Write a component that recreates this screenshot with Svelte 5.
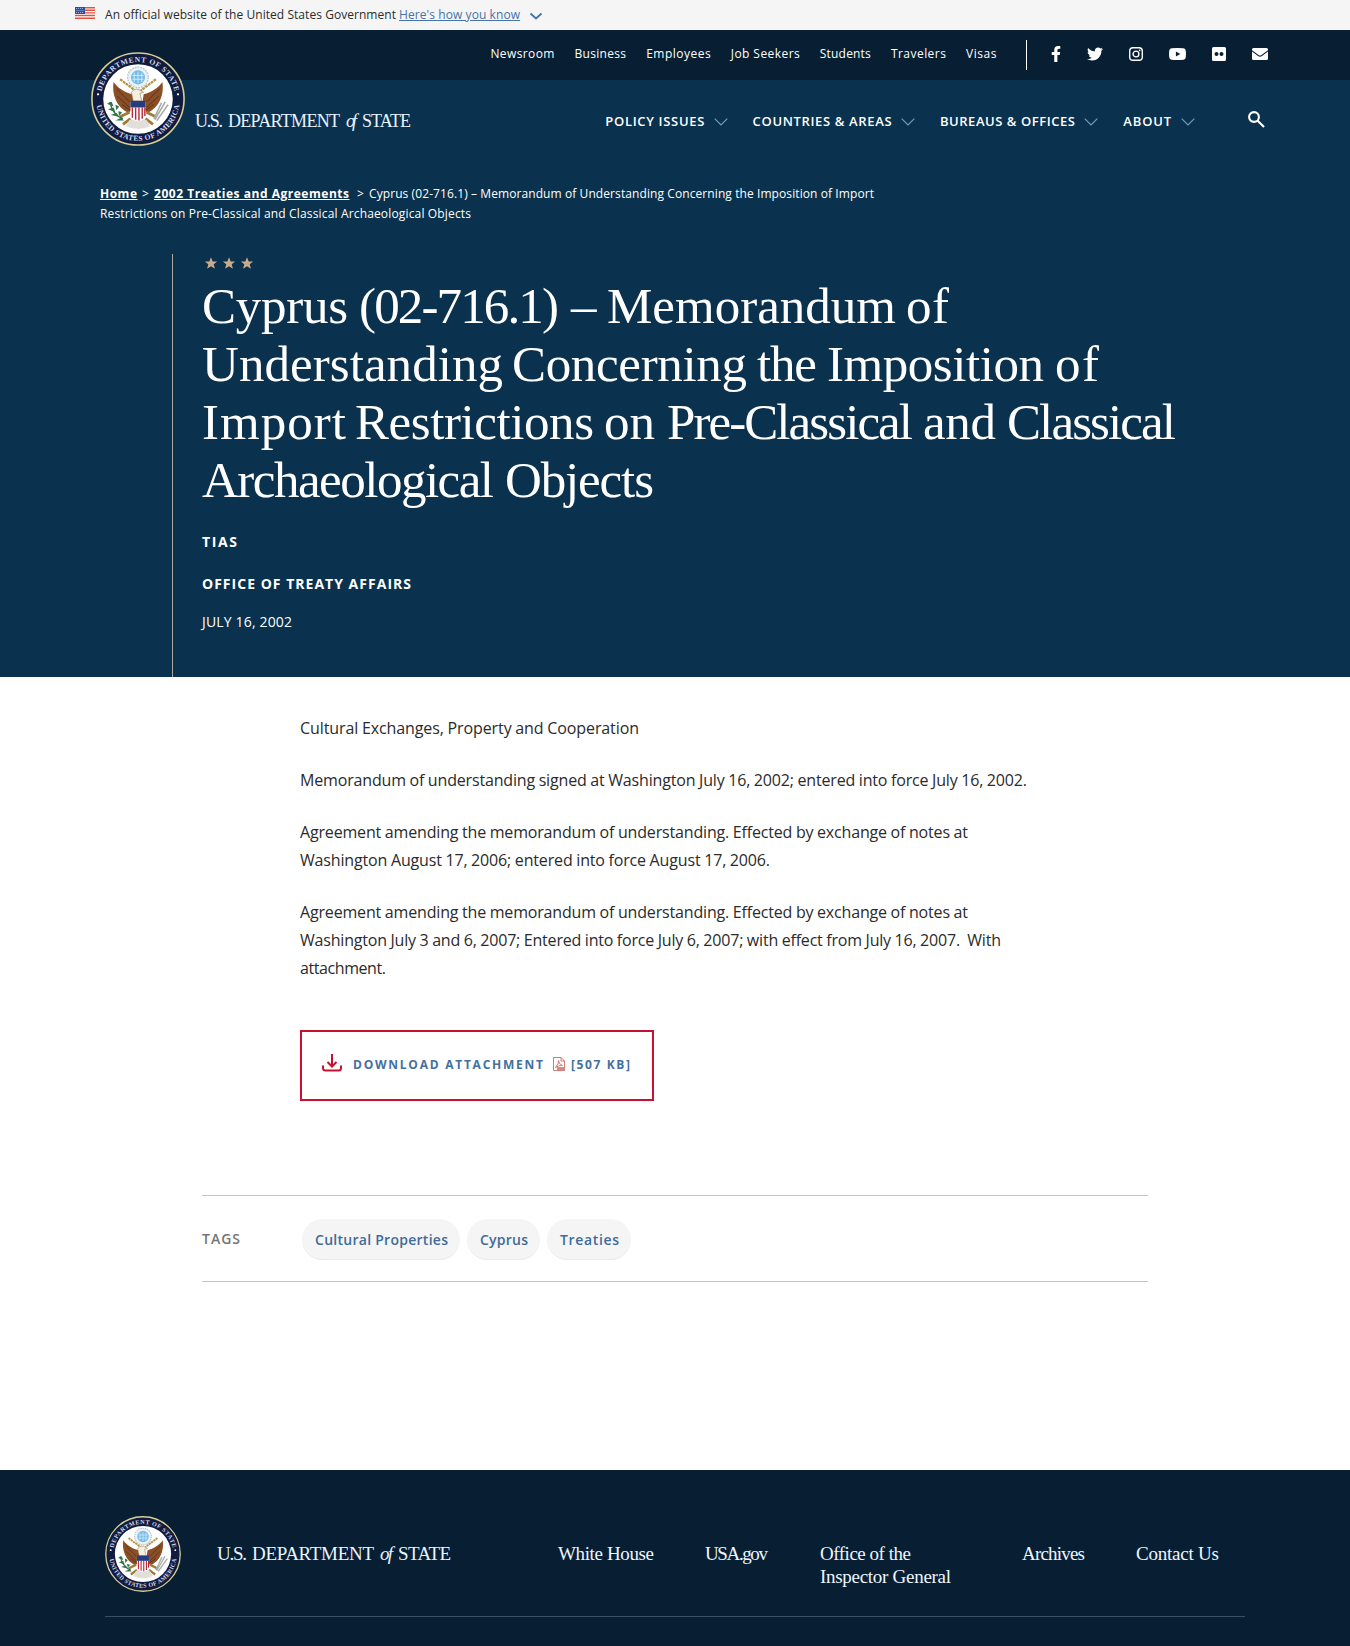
<script>
  const audiences = [
    { label: 'Newsroom', w: 64 },
    { label: 'Business', w: 51.5 },
    { label: 'Employees', w: 64.5 },
    { label: 'Job Seekers', w: 69 },
    { label: 'Students', w: 51 },
    { label: 'Travelers', w: 55 },
    { label: 'Visas', w: 30.5 }
  ];
  const sections = [
    { label: 'POLICY ISSUES', w: 99 },
    { label: 'COUNTRIES & AREAS', w: 139 },
    { label: 'BUREAUS & OFFICES', w: 135 },
    { label: 'ABOUT', w: 48 }
  ];
  // Each title word carries its measure and the space that follows it.
  const titleLines = [
    [['Cyprus', 146, 11], ['(02-716.1)', 200, 12], ['–', 24, 12], ['Memorandum', 289, 10], ['of', 43, 0]],
    [['Understanding', 301, 9], ['Concerning', 235, 10], ['the', 60, 10], ['Imposition', 217, 11], ['of', 44, 0]],
    [['Import', 144, 9], ['Restrictions', 239, 10], ['on', 51, 12], ['Pre-Classical', 246, 10], ['and', 73, 11], ['Classical', 169, 0]],
    [['Archaeological', 292, 11], ['Objects', 149, 0]]
  ];
  const paragraphs = [
    [{ text: 'Cultural Exchanges, Property and Cooperation', w: 339 }],
    [{ text: 'Memorandum of understanding signed at Washington July 16, 2002; entered into force July 16, 2002.', w: 727 }],
    [
      { text: 'Agreement amending the memorandum of understanding. Effected by exchange of notes at', w: 668 },
      { text: 'Washington August 17, 2006; entered into force August 17, 2006.', w: 470 }
    ],
    [
      { text: 'Agreement amending the memorandum of understanding. Effected by exchange of notes at', w: 668 },
      { text: 'Washington July 3 and 6, 2007; Entered into force July 6, 2007; with effect from July 16, 2007.\u00a0 With', w: 701 },
      { text: 'attachment.', w: 86 }
    ]
  ];
  const tags = [
    { label: 'Cultural Properties', w: 133 },
    { label: 'Cyprus', w: 48 },
    { label: 'Treaties', w: 59 }
  ];

  // Tracks a line of text so that it sets to the given measure.
  function fit(node, width) {
    const natural = node.getBoundingClientRect().width;
    const gaps = Math.max(1, node.textContent.length - 1);
    node.style.letterSpacing = `${(width - natural) / gaps}px`;
    node.style.width = `${width}px`;
  }
</script>

{#snippet seal(id)}
  <svg class="seal" viewBox="0 0 100 100" aria-label="Department of State seal">
    <defs>
      <path id="{id}-top" d="M10.5 50a39.500 39.500 0 0 1 79 0" />
      <path id="{id}-bottom" d="M5.500 50a44.500 44.500 0 0 0 89 0" />
    </defs>
    <circle cx="50" cy="50" r="49" fill="#101b40" stroke="#d8cd94" stroke-width="1.700" />
    <circle cx="50" cy="50" r="37" fill="#fff" />
    <g class="ring">
      <text><textPath href="#{id}-top" startOffset="8" textLength="108">DEPARTMENT OF STATE</textPath></text>
      <text><textPath href="#{id}-bottom" startOffset="7" textLength="126">UNITED STATES OF AMERICA</textPath></text>
    </g>
    <circle cx="7.500" cy="45" r="1.200" fill="#fff" />
    <circle cx="92.500" cy="45" r="1.200" fill="#fff" />
    <circle cx="50" cy="27" r="11" fill="#e8f2f7" stroke="#b9c4c6" stroke-width="1.400" stroke-dasharray="2 1" />
    <circle cx="50" cy="27" r="7.500" fill="#76bce6" />
    <path d="M46 22v10M50 21v12M54 22v10M44 25h12M44 29h12" stroke="#d8effb" stroke-width=".9" />
    <path d="M31 29 47 41M69 29 53 41" stroke="#b79547" stroke-width="2.400" stroke-dasharray="3 .7" />
    <path d="M24 32C22 45 27 59 40 65L46 59 44 45C36 43 29 39 24 32ZM76 32C78 45 73 59 60 65L54 59 56 45C64 43 71 39 76 32Z" fill="#8a4f26" />
    <path d="M27 39 41 53M28 47 41 59M33 56 42 62M73 39 59 53M72 47 59 59M67 56 58 62" stroke="#5a2f18" stroke-width="1" />
    <path d="M43 43q3-5 8-3l5 3-4 1 2 8h-9Z" fill="#f4f0df" stroke="#98805d" stroke-width=".7" />
    <path d="M41 64 31 69M59 64 69 69M42 71l-8 6M58 71l8 6" stroke="#a27a35" stroke-width="3" />
    <path d="M41 72h18l4 7q-13 6-26 0Z" fill="#e1dfd9" />
    <path d="M42 53h16v14q0 5-8 7-8-2-8-7Z" fill="#fff" />
    <path d="M44 59v11M47.500 59v13M51 59v14M54.500 59v12M57.300 59v9" stroke="#b72a3a" stroke-width="1.500" />
    <path d="M42 52h16v7H42Z" fill="#263b80" />
    <path d="M20 53q3 14 14 18" fill="none" stroke="#2d7447" stroke-width="1.500" />
    <path d="m17 55 5-2 2 5ZM18 61l6-2 2 5ZM21 67l6-2 3 4ZM26 56l4 2-3 4ZM29 63l4 1-3 4ZM26 73l6-3 3 3Z" fill="#2d7447" />
    <path d="m68 72 11-19M67 71l8-17M70 73l12-17" stroke="#a6aaa9" stroke-width="1.700" />
  </svg>
{/snippet}

{#snippet wordmark(us, dept, of, state)}
  <span class="wordmark">
    <span class="t" use:fit={us}>U.S.</span>
    <span class="t" use:fit={dept}>DEPARTMENT</span>
    <em class="t" use:fit={of}>of</em>
    <span class="t" use:fit={state}>STATE</span>
  </span>
{/snippet}

<div class="gov">
  <svg class="flag" viewBox="0 0 20 12">
    <path fill="#fff" d="M0 0h20v12H0z" />
    <path d="M0 .7h20M0 3.300h20M0 5.900h20M0 8.500h20M0 11.200h20" stroke="#e0523f" stroke-width="1.400" />
    <path fill="#2f4ea8" d="M0 0h10v7H0z" />
    <path d="M1 1.500h8M1.500 3.500h8M1 5.500h8" stroke="#b9c6ee" stroke-width=".8" stroke-dasharray="1 1" />
  </svg>
  <span class="gov-text"><span class="t" use:fit={291}>An official website of the United States Government</span></span>
  <a href="#how"><span class="t" use:fit={121}>Here's how you know</span></a>
  <svg class="gov-chev" viewBox="0 0 14 8"><path d="m1.500 1.500 5.500 5 5.500-5" /></svg>
</div>

<header>
  <a class="logo" href="#home">
    {@render seal('head')}
    {@render wordmark(28, 112, 11, 49)}
  </a>
  <div class="top">
    <nav>
      {#each audiences as a}
        <a href="#nav"><span class="t" use:fit={a.w}>{a.label}</span></a>
      {/each}
    </nav>
    <div class="social">
      <svg width="10" height="16" viewBox="0 0 320 512"><path d="M279 288l14-93h-89v-60c0-25 12-50 52-50h41V7s-37-7-72-7C152 0 104 44 104 125v70H23v93h81v224h100V288z" /></svg>
      <svg width="16" height="16" viewBox="0 0 512 512"><path d="M459.370 151.716c.325 4.548.325 9.097.325 13.645 0 138.720-105.583 298.558-298.558 298.558-59.452 0-114.680-17.219-161.137-47.106 8.447.974 16.568 1.299 25.340 1.299 49.055 0 94.213-16.568 130.274-44.832-46.132-.975-84.792-31.188-98.112-72.772 6.498.974 12.995 1.624 19.818 1.624 9.421 0 18.843-1.300 27.614-3.573-48.081-9.747-84.143-51.980-84.143-102.985v-1.299c13.969 7.797 30.214 12.670 47.431 13.319-28.264-18.843-46.781-51.005-46.781-87.391 0-19.492 5.197-37.360 14.294-52.954 51.655 63.675 129.300 105.258 216.365 109.807-1.624-7.797-2.599-15.918-2.599-24.040 0-57.828 46.782-104.934 104.934-104.934 30.213 0 57.502 12.670 76.670 33.137 23.715-4.548 46.456-13.320 66.599-25.340-7.798 24.366-24.366 44.833-46.132 57.827 21.117-2.273 41.584-8.122 60.426-16.243-14.292 20.791-32.161 39.308-52.628 54.253z" /></svg>
      <svg width="14" height="14" viewBox="0 0 14 14"><rect x=".7" y=".7" width="12.600" height="12.600" rx="3.300" fill="none" stroke="#fff" stroke-width="1.400" /><circle cx="7" cy="7" r="2.900" fill="none" stroke="#fff" stroke-width="1.400" /><circle cx="10.700" cy="3.300" r=".85" /></svg>
      <svg width="17" height="12" viewBox="0 0 17 12"><path fill-rule="evenodd" d="M2.500.3Q8.500-.3 14.500.3q2 .2 2.200 2.200.5 3.500 0 7-.2 2-2.200 2.200-6 .6-12 0-2-.2-2.200-2.200-.5-3.500 0-7Q.5.500 2.500.3ZM6.900 3.500v5L11.300 6Z" /></svg>
      <svg width="14" height="14" viewBox="0 0 14 14"><path fill-rule="evenodd" d="M1.500 0h11Q14 0 14 1.500v11q0 1.500-1.500 1.500h-11Q0 14 0 12.500v-11Q0 0 1.500 0ZM4.500 5a2 2 0 1 0 0 4 2 2 0 0 0 0-4Zm5 0a2 2 0 1 0 0 4 2 2 0 0 0 0-4Z" /></svg>
      <svg width="16" height="12" viewBox="0 0 16 12"><path d="M1.500 0h13Q16 0 16 1.500v.7L9.500 7Q8 8 6.500 7L0 2.200v-.7Q0 0 1.500 0ZM0 3.500 6 8q2 1.300 4 0l6-4.500v7q0 1.500-1.500 1.500h-13Q0 12 0 10.500Z" /></svg>
    </div>
  </div>
  <div class="main-nav">
    {#each sections as s}
      <a href="#section"><span class="t" use:fit={s.w}>{s.label}</span><svg class="chev" viewBox="0 0 14 8"><path d="m.7.700 6.300 6.300 6.300-6.300" /></svg></a>
    {/each}
    <svg class="search" viewBox="0 0 17 17"><circle cx="6" cy="6" r="4.900" /><path d="m9.700 9.700 6.300 6.300" /></svg>
  </div>
</header>

<section class="hero">
  <div class="crumbs">
    <div><a href="#home"><span class="t" use:fit={37}>Home</span></a><i class="s1">&gt;</i><a href="#2002"><span class="t" use:fit={195}>2002 Treaties and Agreements</span></a><i class="s2">&gt;</i><span class="t" use:fit={505}>Cyprus (02-716.1) – Memorandum of Understanding Concerning the Imposition of Import</span></div>
    <div><span class="t" use:fit={371}>Restrictions on Pre-Classical and Classical Archaeological Objects</span></div>
  </div>
  <div class="intro">
    <svg class="stars" viewBox="0 0 48 12">
      {#each [6, 24, 42] as x}
        <path transform="translate({x} 6.500) scale(1.120)" d="M0-5.500 1.500-1.800 5.500-1.700 2.400.700 3.500 4.700 0 2.400-3.500 4.700-2.400.700-5.500-1.700-1.500-1.800Z" />
      {/each}
    </svg>
    <h1>
      {#each titleLines as line}
        <span class="line">
          {#each line as [word, w, space]}
            <span class="t" use:fit={w} style:margin-right="{space}px">{word}</span>{' '}
          {/each}
        </span>
      {/each}
    </h1>
    <p class="kind"><span class="t" use:fit={35}>TIAS</span></p>
    <p class="office"><span class="t" use:fit={209}>OFFICE OF TREATY AFFAIRS</span></p>
    <p class="date"><span class="t" use:fit={90}>JULY 16, 2002</span></p>
  </div>
</section>

<main>
  <article>
    {#each paragraphs as p}
      <p>
        {#each p as line}
          <span class="line"><span class="t" use:fit={line.w}>{line.text}</span></span>
        {/each}
      </p>
    {/each}
    <a class="download" href="#file">
      <svg class="dl" viewBox="0 0 20 18"><path d="M10 0v12M5.500 8l4.500 4.500L14.500 8M1 11.500V14q0 2.500 2.500 2.500h13Q19 16.500 19 14v-2.500" /></svg>
      <span class="t" use:fit={190}>DOWNLOAD ATTACHMENT</span>
      <svg class="pdf" viewBox="0 0 12 14"><path d="M.5.500h7.500l3.500 3.500v9.500H.5ZM8 .5V4h3.500M2.500 10.500Q6 7 5.500 3.500 5.500 7 9.500 8.500 6 8 2.500 10.500Z" /><path d="M4 10h7v3H4z" class="label" /></svg>
      <span class="t" use:fit={59}>[507 KB]</span>
    </a>
  </article>
  <div class="tags">
    <h2><span class="t" use:fit={38}>TAGS</span></h2>
    {#each tags as tag}
      <a href="#tag"><span class="t" use:fit={tag.w}>{tag.label}</span></a>
    {/each}
  </div>
</main>

<footer>
  <div class="foot">
    {@render seal('foot')}
    {@render wordmark(30, 122, 13, 53)}
    <nav>
      <a class="f1" href="#wh"><span class="t" use:fit={96}>White House</span></a>
      <a class="f2" href="#usa"><span class="t" use:fit={63}>USA.gov</span></a>
      <a class="f3" href="#oig"><span class="t" use:fit={91}>Office of the</span><br /><span class="t" use:fit={131}>Inspector General</span></a>
      <a class="f4" href="#arch"><span class="t" use:fit={63}>Archives</span></a>
      <a class="f5" href="#contact"><span class="t" use:fit={83}>Contact Us</span></a>
    </nav>
  </div>
</footer>

<style>
  :global(body) { margin: 0; background: #fff; font-family: 'Open Sans', sans-serif; color: #2b2b2b; }
  :global(*) { box-sizing: border-box; }
  a { color: inherit; text-decoration: none; }
  svg { display: block; flex: none; }
  .t { display: inline-block; white-space: nowrap; }
  .line { display: block; }

  .gov { height: 30px; padding: 0 0 2px 75px; display: flex; align-items: center; background: #f5f5f5; font-size: 12px; }
  .flag { width: 20px; height: 12px; margin: 0 10px 2px 0; }
  .gov a { margin-left: 3px; color: #4773a5; text-decoration: underline; }
  .gov a .t { text-decoration: underline; }
  .gov-chev { width: 14px; height: 8px; margin: 4px 0 0 9px; fill: none; stroke: #4773a5; stroke-width: 1.800; }

  header { display: grid; grid-template: 50px 90px / 500px 1fr; background: linear-gradient(#081f33 50px, #0a314d 50px); color: #fff; }
  .logo { grid-row: 1 / 3; display: flex; padding: 22px 0 0 91px; }
  .logo .seal { width: 94px; height: 94px; }
  .logo .wordmark { margin: 55px 0 0 10px; }
  .wordmark { display: flex; gap: 5px; font: 18px/28px 'Liberation Serif', serif; color: #e8f4ff; }
  .wordmark em { margin-left: 1px; }
  .ring text { font: bold 8px 'Liberation Serif', serif; fill: #d4d9ee; }
  .top { display: flex; justify-content: flex-end; align-items: center; padding-right: 82px; margin-left: -20px; }
  .top nav { display: flex; gap: 20.100px; font-size: 12px; line-height: 20px; margin: -2px 0 0; }
  .social { display: flex; align-items: center; gap: 26px; height: 30px; margin-left: 29.500px; padding: 0 0 2px 24px; border-left: 1px solid #fff; fill: #fff; }
  .main-nav { display: flex; justify-content: flex-end; align-items: flex-start; padding: 31px 85px 0 0; font-size: 13px; font-weight: 600; line-height: 20px; }
  .main-nav a { display: flex; align-items: center; margin-right: 24.800px; }
  .chev { width: 14px; height: 8px; margin: 1px 0 0 9.500px; fill: none; stroke: #7a9fbd; stroke-width: 1.100; }
  .search { width: 17px; height: 17px; margin-left: 28.500px; fill: none; stroke: #fff; stroke-width: 2.100; }

  .hero { height: 507px; background: #0a314d; color: #fff; padding-top: 14px; }
  .crumbs { margin-left: 100px; height: 70px; font-size: 12px; line-height: 20px; }
  .crumbs div { display: flex; }
  .crumbs a { font-weight: 700; text-decoration: underline; }
  .crumbs a .t { text-decoration: underline; }
  .crumbs i { font-style: normal; }
  .s1 { width: 17px; padding-left: 5px; }
  .s2 { width: 20px; padding-left: 8px; }
  .intro { margin-left: 172px; border-left: 1px solid #a9a8a0; height: 423px; padding: 3px 0 0 29px; }
  .stars { width: 48px; height: 12px; margin-left: 3px; fill: #c9ab8b; overflow: visible; }
  h1 { margin: 8px 0 0; font: 400 51px/58px 'Liberation Serif', serif; }
  h1 .line { display: flex; height: 58px; }
  .intro p { margin: 0; font-size: 14px; line-height: 20px; }
  .intro .kind { margin-top: 23px; font-weight: 700; }
  .intro .office { margin-top: 22px; font-weight: 700; }
  .intro .date { margin-top: 18px; }

  main { height: 793px; padding: 37px 0 0 202px; }
  article { margin-left: 98px; }
  article p { margin: 0 0 24px; font-size: 16px; line-height: 28px; word-spacing: -0.300px; }
  article .line { height: 28px; }
  .download { width: 354px; height: 71px; margin-top: 48px; padding: 0 0 3px 20px; display: flex; align-items: center; border: 2px solid #c41230; color: #44709f; font-size: 12px; font-weight: 700; }
  .dl { width: 20px; height: 18px; margin: 0 11px 3px 0; fill: none; stroke: #c41230; stroke-width: 2; }
  .pdf { width: 12px; height: 14px; margin: 0 6px 0 10px; fill: none; stroke: #cf6e64; stroke-width: .9; }
  .pdf .label { fill: #cf8f88; stroke: none; }
  .tags { width: 946px; height: 87px; margin-top: 94px; display: flex; align-items: center; border: solid #c2c5c4; border-width: 1px 0; font-size: 14px; font-weight: 600; }
  .tags h2 { width: 100px; margin: 0; font-size: 14px; font-weight: 600; color: #757575; }
  .tags a { height: 41px; line-height: 42px; margin: 2px 7px 0 0; padding: 0 12px 0 13px; border-radius: 21px; background: #f5f5f5; border-bottom: 1px solid #e9e9e9; color: #3f6c9c; }

  footer { height: 176px; padding: 45px 105px 0; background: #081f33; color: #fff; }
  .foot { height: 102px; display: flex; align-items: flex-start; border-bottom: 1px solid #3a5067; }
  .foot .seal { width: 76px; height: 76px; margin-top: 1px; }
  .foot .wordmark { margin: 25px 0 0 36px; font-size: 19px; }
  .foot nav { display: flex; margin: 27px 0 0 107px; font: 19px/23px 'Liberation Serif', serif; color: #eef6ff; }
  .f2 { margin-left: 51px; }
  .f3 { margin-left: 52px; }
  .f4 { margin-left: 71px; }
  .f5 { margin-left: 51px; }
</style>
